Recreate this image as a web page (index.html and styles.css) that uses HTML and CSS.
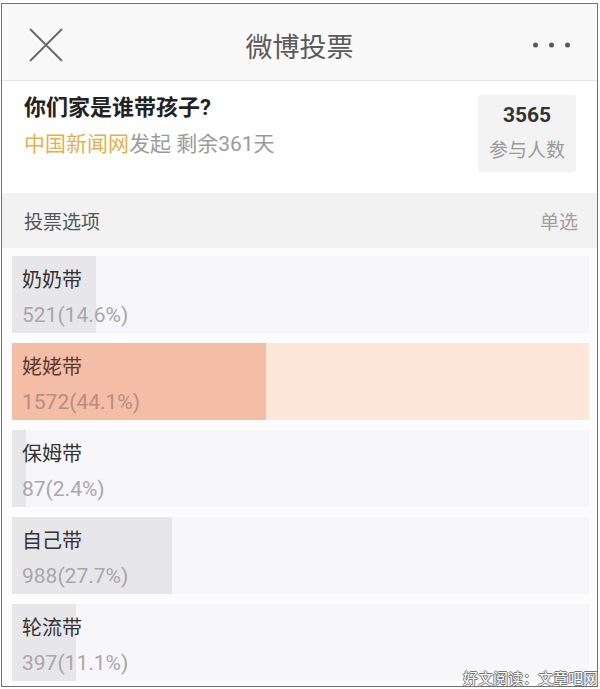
FILE: index.html
```html
<!DOCTYPE html>
<html lang="zh-CN">
<head>
    <meta charset="UTF-8">
    <meta name="viewport" content="width=device-width, initial-scale=1.0">
    <title>微博投票</title>
    <link rel="stylesheet" href="styles.css">
</head>
<body>
    <div class="card">
        <div class="topbar">
            <svg class="close" width="34" height="34" viewBox="0 0 34 34">
                <path d="M1 1 L33 33 M33 1 L1 33" stroke="#6a6a6a" stroke-width="2" fill="none"/>
            </svg>
            <div class="title">微博投票</div>
            <svg class="more" width="37" height="6" viewBox="0 0 37 6">
                <circle cx="2.5" cy="3" r="2.5" fill="#5a5a5a"/>
                <circle cx="18.5" cy="3" r="2.5" fill="#5a5a5a"/>
                <circle cx="34.5" cy="3" r="2.5" fill="#5a5a5a"/>
            </svg>
        </div>

        <div class="question">
            <div class="info">
                <h2>你们家是谁带孩子?</h2>
                <p class="meta"><span class="source">中国新闻网</span>发起 剩余361天</p>
            </div>
            <div class="stat">
                <strong>3565</strong>
                <span>参与人数</span>
            </div>
        </div>

        <div class="section">
            <span>投票选项</span>
            <span class="mode">单选</span>
        </div>

        <div class="options">
            <div class="option">
                <div class="fill" style="width: 14.6%"></div>
                <div class="text">
                    <div class="label">奶奶带</div>
                    <div class="count">521(14.6%)</div>
                </div>
            </div>
            <div class="option top">
                <div class="fill" style="width: 44.1%"></div>
                <div class="text">
                    <div class="label">姥姥带</div>
                    <div class="count">1572(44.1%)</div>
                </div>
            </div>
            <div class="option">
                <div class="fill" style="width: 2.4%"></div>
                <div class="text">
                    <div class="label">保姆带</div>
                    <div class="count">87(2.4%)</div>
                </div>
            </div>
            <div class="option">
                <div class="fill" style="width: 27.7%"></div>
                <div class="text">
                    <div class="label">自己带</div>
                    <div class="count">988(27.7%)</div>
                </div>
            </div>
            <div class="option">
                <div class="fill" style="width: 11.1%"></div>
                <div class="text">
                    <div class="label">轮流带</div>
                    <div class="count">397(11.1%)</div>
                </div>
            </div>
        </div>
    </div>
    <div class="watermark">好文阅读：文章吧网</div>
</body>
</html>
```

FILE: styles.css
```css
body {
    margin: 0;
    padding: 3px 2px 2px 1px;
    background: #fff;
    font-family: Roboto, "Noto Sans CJK SC", sans-serif;
    color: #333;
    position: relative;
}
.card {
    border: 1px solid #707070;
    background: #fff;
}
.topbar {
    display: grid;
    grid-template-columns: 1fr auto 1fr;
    align-items: center;
    height: 70px;
    padding-top: 6px;
    background: #f9f9f9;
    border-bottom: 1px solid #e4e4e4;
}
.close {
    justify-self: start;
    margin-left: 27px;
}
.title {
    font-size: 27px;
    color: #5a5a5a;
}
.more {
    justify-self: end;
    margin-right: 27px;
}
.question {
    display: flex;
    justify-content: space-between;
    height: 112px;
    padding: 0 21px 0 22px;
}
.question h2 {
    margin: 13px 0 0;
    font-size: 22px;
    line-height: 28px;
    font-weight: bold;
    color: #222;
}
.meta {
    margin: 9px 0 0;
    font-size: 21px;
    line-height: 26px;
    color: #9a9a9a;
}
.source {
    color: #e6b04a;
}
.stat {
    display: flex;
    flex-direction: column;
    align-items: center;
    width: 98px;
    height: 77px;
    margin-top: 14px;
    background: #f3f3f3;
    border-radius: 3px;
}
.stat strong {
    margin-top: 7px;
    font-size: 21px;
    line-height: 26px;
    color: #333;
}
.stat span {
    margin-top: 10px;
    font-size: 19px;
    line-height: 26px;
    color: #9a9a9a;
}
.section {
    display: flex;
    justify-content: space-between;
    align-items: center;
    height: 55px;
    padding: 0 19px 0 22px;
    background: #f2f2f2;
    font-size: 19px;
    color: #555;
}
.section .mode {
    color: #a0a0a0;
}
.options {
    display: flex;
    flex-direction: column;
    gap: 10px;
    padding: 8px 8px 5px 10px;
    background: #fdfcfd;
}
.option {
    display: grid;
    height: 77px;
    background: #f7f6f9;
}
.option > * {
    grid-area: 1 / 1;
}
.fill {
    background: #e7e6e9;
}
.text {
    padding: 11px 0 0 10px;
}
.label {
    font-size: 20px;
    line-height: 26px;
    color: #333;
}
.count {
    margin-top: 9px;
    font-size: 21px;
    line-height: 26px;
    color: #a8a8a8;
}
.option.top {
    background: #fde7d8;
}
.option.top .fill {
    background: #f4bda6;
}
.option.top .label {
    color: #5a3a2f;
}
.option.top .count {
    color: #b88e80;
}
.watermark {
    position: absolute;
    right: 2px;
    bottom: 1px;
    font-size: 15px;
    line-height: 18px;
    color: #fff;
    text-shadow: 1px 0 #777, -1px 0 #777, 0 1px #777, 0 -1px #777;
}
```
